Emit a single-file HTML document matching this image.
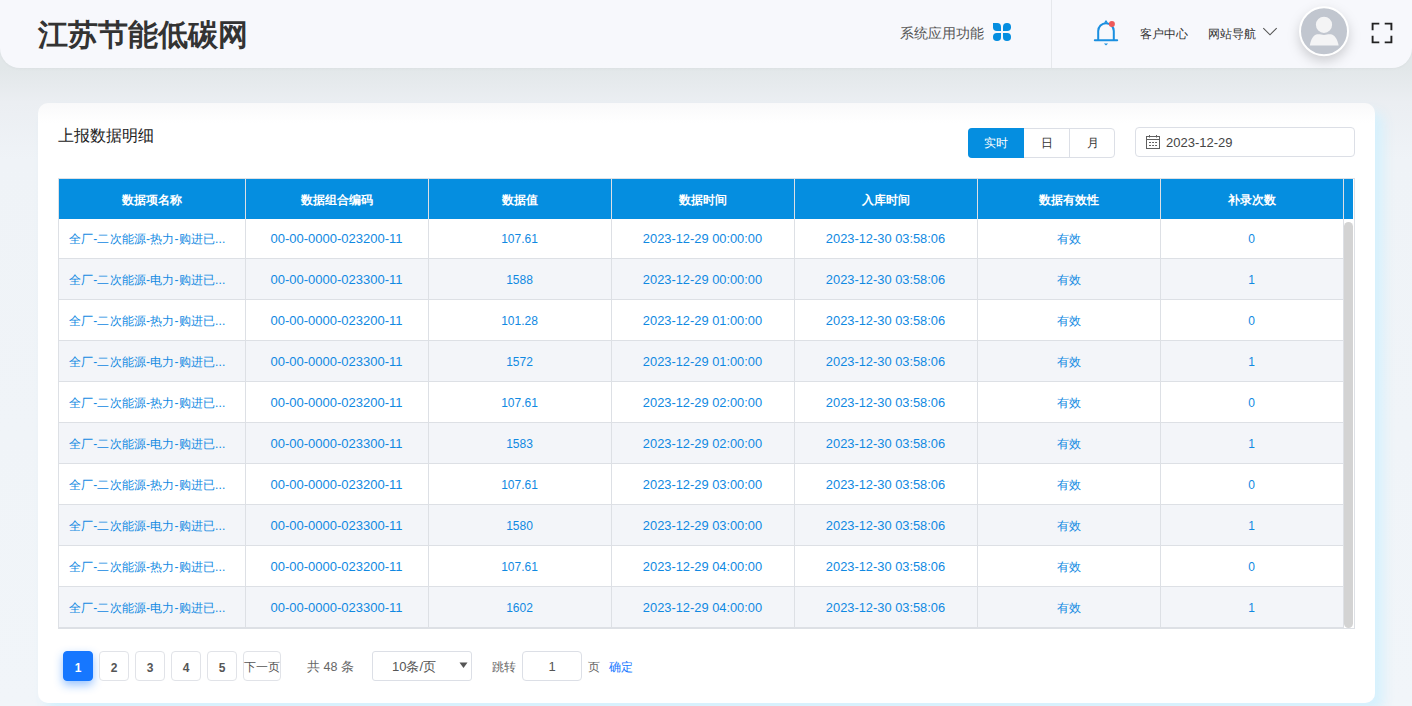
<!DOCTYPE html>
<html><head><meta charset="utf-8">
<style>
*{box-sizing:border-box;margin:0;padding:0}
html,body{width:1412px;height:706px;overflow:hidden}
body{font-family:"Liberation Sans",sans-serif;background:linear-gradient(180deg,#e2e7e9 68px,#ebeef2 102px,#eff3f7 160px,#f1f5f9 100%);position:relative;color:#333}
.a{position:absolute;white-space:nowrap}
.hdr{left:0;top:0;width:1412px;height:68px;background:#f7f8fc;border-radius:0 0 20px 20px;box-shadow:0 1px 3px rgba(0,0,0,0.03)}
.logo{left:38px;top:18px;font-size:30px;font-weight:900;color:#333;line-height:34px}
.card{left:38px;top:103px;width:1337px;height:600px;background:linear-gradient(180deg,#f9f9fa 0px,#ffffff 20px);border-radius:10px;box-shadow:8px 9px 12px rgba(212,240,253,0.95)}
.tht{color:#fff;font-size:12px;font-weight:bold;text-align:center}
.td{color:#1089e2}
.c0{font-size:12px;letter-spacing:0.15px}.c1{font-size:13px}.c2{font-size:12px}.c3{font-size:12.85px}.c5{font-size:12px}
.hl{height:1px;background:#dde0e5}
.vl{width:1px;background:#dde0e5}
.pb{width:30px;height:30px;border:1px solid #e1e3e8;border-radius:4px;background:#fff;font-size:12px;font-weight:bold;color:#555;text-align:center;line-height:32px}
</style></head><body>
<div class="a hdr"></div>
<div class="a logo">江苏节能低碳网</div>
<div class="a" style="left:900px;top:24px;font-size:14px;line-height:18px;color:#555">系统应用功能</div>
<svg class="a" style="left:993px;top:23px" width="18" height="18" viewBox="0 0 18 18"><g fill="#058ee0">
<path d="M0 0H4.2A3.8 3.8 0 0 1 8 3.8V8H3.8A3.8 3.8 0 0 1 0 4.2Z"/>
<path d="M10 8V3.8A3.8 3.8 0 0 1 13.8 0h0.4A3.8 3.8 0 0 1 18 3.8v0.4A3.8 3.8 0 0 1 14.2 8Z"/>
<path d="M8 10V14.2A3.8 3.8 0 0 1 4.2 18h-0.4A3.8 3.8 0 0 1 0 14.2v-0.4A3.8 3.8 0 0 1 3.8 10Z"/>
<path d="M10 10H14.2A3.8 3.8 0 0 1 18 13.8v0.4A3.8 3.8 0 0 1 14.2 18h-0.4A3.8 3.8 0 0 1 10 14.2Z"/>
</g></svg>
<div class="a" style="left:1051px;top:0;width:1px;height:68px;background:#e6e8ec"></div>
<svg class="a" style="left:1090px;top:16px" width="32" height="32" viewBox="0 0 32 32">
<path d="M4.8 24.3H27.2" stroke="#1a8fe0" stroke-width="2" stroke-linecap="round" fill="none"/>
<path d="M8.2 24V15A7.8 7.8 0 0 1 23.8 15V24" stroke="#1a8fe0" stroke-width="2" fill="none"/>
<path d="M14 6.8L16 3.9L18 6.8Z" fill="#1a8fe0"/>
<path d="M13.9 27.4H18.1L16 29.4Z" fill="#1a8fe0"/>
<circle cx="21.9" cy="7.9" r="3" fill="#ee5a5a"/>
</svg>
<div class="a" style="left:1140px;top:26px;font-size:12px;line-height:16px;color:#333">客户中心</div>
<div class="a" style="left:1208px;top:26px;font-size:12px;line-height:16px;color:#333">网站导航</div>
<svg class="a" style="left:1262px;top:27px" width="16" height="10" viewBox="0 0 16 10"><path d="M1.3 1.2L8 7.8L14.7 1.2" stroke="#555" stroke-width="1.1" fill="none"/></svg>
<svg class="a" style="left:1298px;top:5px;filter:drop-shadow(0 5px 6px rgba(0,0,0,0.17))" width="52" height="52" viewBox="0 0 52 52">
<circle cx="26" cy="26.2" r="24" fill="#c1c6cf" stroke="#fff" stroke-width="2"/>
<path d="M11.8 40.6C12.8 34.5 15.5 29.6 19.5 29.3H32.5C36.5 29.6 39.6 34.5 40.6 40.6Z" fill="#f4f4f5"/>
<circle cx="26" cy="19.8" r="9.1" fill="#f4f4f5" stroke="#c1c6cf" stroke-width="2"/>
</svg>
<svg class="a" style="left:1371px;top:22px" width="22" height="22" viewBox="0 0 22 22"><path d="M1.6 8.3V1.6H8.3M13.7 1.6H20.4V8.3M20.4 13.7V20.4H13.7M8.3 20.4H1.6V13.7" stroke="#222" stroke-width="1.9" fill="none"/></svg>
<div class="a card"></div>
<div class="a" style="left:58px;top:126px;font-size:16px;line-height:20px;font-weight:500;color:#222">上报数据明细</div>
<div class="a" style="left:968px;top:128px;width:147px;height:30px;border:1px solid #dcdfe6;border-radius:4px;background:#fff"></div>
<div class="a" style="left:968px;top:128px;width:56px;height:30px;background:#058ee0;border-radius:4px 0 0 4px;color:#fff;font-size:12px;text-align:center;line-height:30px">实时</div>
<div class="a" style="left:1024px;top:128px;width:46px;height:30px;border-right:1px solid #dcdfe6;font-size:12px;text-align:center;line-height:30px;color:#333">日</div>
<div class="a" style="left:1070px;top:128px;width:45px;height:30px;font-size:12px;text-align:center;line-height:30px;color:#333">月</div>
<div class="a" style="left:1135px;top:127px;width:220px;height:30px;border:1px solid #dcdfe6;border-radius:4px;background:#fff"></div>
<svg class="a" style="left:1145px;top:134px" width="16" height="16" viewBox="0 0 16 16"><g fill="none" stroke="#606060" stroke-width="1"><rect x="1.5" y="2.5" width="13" height="12"/><path d="M1.5 5.5H14.5M4.5 1V3.5M11.5 1V3.5"/></g><path d="M4 8.5H6M7.1 8.5H9M10.1 8.5H12M4 11.5H6M7.1 11.5H9M10.1 11.5H12" stroke="#606060" stroke-width="1"/></svg>
<div class="a" style="left:1166px;top:128px;line-height:30px;font-size:13px;color:#444">2023-12-29</div>
<div class="a" style="left:58px;top:179px;width:1295px;height:40px;background:#058ee0"></div>
<div class="a tht" style="left:58px;top:180px;width:187px;line-height:40px">数据项名称</div>
<div class="a tht" style="left:245px;top:180px;width:183px;line-height:40px">数据组合编码</div>
<div class="a tht" style="left:428px;top:180px;width:183px;line-height:40px">数据值</div>
<div class="a tht" style="left:611px;top:180px;width:183px;line-height:40px">数据时间</div>
<div class="a tht" style="left:794px;top:180px;width:183px;line-height:40px">入库时间</div>
<div class="a tht" style="left:977px;top:180px;width:183px;line-height:40px">数据有效性</div>
<div class="a tht" style="left:1160px;top:180px;width:183px;line-height:40px">补录次数</div>
<div class="a" style="left:58px;top:219px;width:1285px;height:40px;background:#ffffff"></div>
<div class="a td c0" style="left:69px;top:219px;line-height:41px">全厂-二次能源-热力-购进已...</div>
<div class="a td c1" style="left:245px;top:218.4px;width:183px;text-align:center;line-height:41px">00-00-0000-023200-11</div>
<div class="a td c2" style="left:428px;top:219px;width:183px;text-align:center;line-height:41px">107.61</div>
<div class="a td c3" style="left:611px;top:218.4px;width:183px;text-align:center;line-height:41px">2023-12-29 00:00:00</div>
<div class="a td c3" style="left:794px;top:218.4px;width:183px;text-align:center;line-height:41px">2023-12-30 03:58:06</div>
<div class="a td c5" style="left:977px;top:219px;width:183px;text-align:center;line-height:41px">有效</div>
<div class="a td c2" style="left:1160px;top:219px;width:183px;text-align:center;line-height:41px">0</div>
<div class="a hl" style="left:58px;top:258px;width:1285px"></div>
<div class="a" style="left:58px;top:259px;width:1285px;height:41px;background:#f3f5f9"></div>
<div class="a td c0" style="left:69px;top:260px;line-height:41px">全厂-二次能源-电力-购进已...</div>
<div class="a td c1" style="left:245px;top:259.4px;width:183px;text-align:center;line-height:41px">00-00-0000-023300-11</div>
<div class="a td c2" style="left:428px;top:260px;width:183px;text-align:center;line-height:41px">1588</div>
<div class="a td c3" style="left:611px;top:259.4px;width:183px;text-align:center;line-height:41px">2023-12-29 00:00:00</div>
<div class="a td c3" style="left:794px;top:259.4px;width:183px;text-align:center;line-height:41px">2023-12-30 03:58:06</div>
<div class="a td c5" style="left:977px;top:260px;width:183px;text-align:center;line-height:41px">有效</div>
<div class="a td c2" style="left:1160px;top:260px;width:183px;text-align:center;line-height:41px">1</div>
<div class="a hl" style="left:58px;top:299px;width:1285px"></div>
<div class="a" style="left:58px;top:300px;width:1285px;height:41px;background:#ffffff"></div>
<div class="a td c0" style="left:69px;top:301px;line-height:41px">全厂-二次能源-热力-购进已...</div>
<div class="a td c1" style="left:245px;top:300.4px;width:183px;text-align:center;line-height:41px">00-00-0000-023200-11</div>
<div class="a td c2" style="left:428px;top:301px;width:183px;text-align:center;line-height:41px">101.28</div>
<div class="a td c3" style="left:611px;top:300.4px;width:183px;text-align:center;line-height:41px">2023-12-29 01:00:00</div>
<div class="a td c3" style="left:794px;top:300.4px;width:183px;text-align:center;line-height:41px">2023-12-30 03:58:06</div>
<div class="a td c5" style="left:977px;top:301px;width:183px;text-align:center;line-height:41px">有效</div>
<div class="a td c2" style="left:1160px;top:301px;width:183px;text-align:center;line-height:41px">0</div>
<div class="a hl" style="left:58px;top:340px;width:1285px"></div>
<div class="a" style="left:58px;top:341px;width:1285px;height:41px;background:#f3f5f9"></div>
<div class="a td c0" style="left:69px;top:342px;line-height:41px">全厂-二次能源-电力-购进已...</div>
<div class="a td c1" style="left:245px;top:341.4px;width:183px;text-align:center;line-height:41px">00-00-0000-023300-11</div>
<div class="a td c2" style="left:428px;top:342px;width:183px;text-align:center;line-height:41px">1572</div>
<div class="a td c3" style="left:611px;top:341.4px;width:183px;text-align:center;line-height:41px">2023-12-29 01:00:00</div>
<div class="a td c3" style="left:794px;top:341.4px;width:183px;text-align:center;line-height:41px">2023-12-30 03:58:06</div>
<div class="a td c5" style="left:977px;top:342px;width:183px;text-align:center;line-height:41px">有效</div>
<div class="a td c2" style="left:1160px;top:342px;width:183px;text-align:center;line-height:41px">1</div>
<div class="a hl" style="left:58px;top:381px;width:1285px"></div>
<div class="a" style="left:58px;top:382px;width:1285px;height:41px;background:#ffffff"></div>
<div class="a td c0" style="left:69px;top:383px;line-height:41px">全厂-二次能源-热力-购进已...</div>
<div class="a td c1" style="left:245px;top:382.4px;width:183px;text-align:center;line-height:41px">00-00-0000-023200-11</div>
<div class="a td c2" style="left:428px;top:383px;width:183px;text-align:center;line-height:41px">107.61</div>
<div class="a td c3" style="left:611px;top:382.4px;width:183px;text-align:center;line-height:41px">2023-12-29 02:00:00</div>
<div class="a td c3" style="left:794px;top:382.4px;width:183px;text-align:center;line-height:41px">2023-12-30 03:58:06</div>
<div class="a td c5" style="left:977px;top:383px;width:183px;text-align:center;line-height:41px">有效</div>
<div class="a td c2" style="left:1160px;top:383px;width:183px;text-align:center;line-height:41px">0</div>
<div class="a hl" style="left:58px;top:422px;width:1285px"></div>
<div class="a" style="left:58px;top:423px;width:1285px;height:41px;background:#f3f5f9"></div>
<div class="a td c0" style="left:69px;top:424px;line-height:41px">全厂-二次能源-电力-购进已...</div>
<div class="a td c1" style="left:245px;top:423.4px;width:183px;text-align:center;line-height:41px">00-00-0000-023300-11</div>
<div class="a td c2" style="left:428px;top:424px;width:183px;text-align:center;line-height:41px">1583</div>
<div class="a td c3" style="left:611px;top:423.4px;width:183px;text-align:center;line-height:41px">2023-12-29 02:00:00</div>
<div class="a td c3" style="left:794px;top:423.4px;width:183px;text-align:center;line-height:41px">2023-12-30 03:58:06</div>
<div class="a td c5" style="left:977px;top:424px;width:183px;text-align:center;line-height:41px">有效</div>
<div class="a td c2" style="left:1160px;top:424px;width:183px;text-align:center;line-height:41px">1</div>
<div class="a hl" style="left:58px;top:463px;width:1285px"></div>
<div class="a" style="left:58px;top:464px;width:1285px;height:41px;background:#ffffff"></div>
<div class="a td c0" style="left:69px;top:465px;line-height:41px">全厂-二次能源-热力-购进已...</div>
<div class="a td c1" style="left:245px;top:464.4px;width:183px;text-align:center;line-height:41px">00-00-0000-023200-11</div>
<div class="a td c2" style="left:428px;top:465px;width:183px;text-align:center;line-height:41px">107.61</div>
<div class="a td c3" style="left:611px;top:464.4px;width:183px;text-align:center;line-height:41px">2023-12-29 03:00:00</div>
<div class="a td c3" style="left:794px;top:464.4px;width:183px;text-align:center;line-height:41px">2023-12-30 03:58:06</div>
<div class="a td c5" style="left:977px;top:465px;width:183px;text-align:center;line-height:41px">有效</div>
<div class="a td c2" style="left:1160px;top:465px;width:183px;text-align:center;line-height:41px">0</div>
<div class="a hl" style="left:58px;top:504px;width:1285px"></div>
<div class="a" style="left:58px;top:505px;width:1285px;height:41px;background:#f3f5f9"></div>
<div class="a td c0" style="left:69px;top:506px;line-height:41px">全厂-二次能源-电力-购进已...</div>
<div class="a td c1" style="left:245px;top:505.4px;width:183px;text-align:center;line-height:41px">00-00-0000-023300-11</div>
<div class="a td c2" style="left:428px;top:506px;width:183px;text-align:center;line-height:41px">1580</div>
<div class="a td c3" style="left:611px;top:505.4px;width:183px;text-align:center;line-height:41px">2023-12-29 03:00:00</div>
<div class="a td c3" style="left:794px;top:505.4px;width:183px;text-align:center;line-height:41px">2023-12-30 03:58:06</div>
<div class="a td c5" style="left:977px;top:506px;width:183px;text-align:center;line-height:41px">有效</div>
<div class="a td c2" style="left:1160px;top:506px;width:183px;text-align:center;line-height:41px">1</div>
<div class="a hl" style="left:58px;top:545px;width:1285px"></div>
<div class="a" style="left:58px;top:546px;width:1285px;height:41px;background:#ffffff"></div>
<div class="a td c0" style="left:69px;top:547px;line-height:41px">全厂-二次能源-热力-购进已...</div>
<div class="a td c1" style="left:245px;top:546.4px;width:183px;text-align:center;line-height:41px">00-00-0000-023200-11</div>
<div class="a td c2" style="left:428px;top:547px;width:183px;text-align:center;line-height:41px">107.61</div>
<div class="a td c3" style="left:611px;top:546.4px;width:183px;text-align:center;line-height:41px">2023-12-29 04:00:00</div>
<div class="a td c3" style="left:794px;top:546.4px;width:183px;text-align:center;line-height:41px">2023-12-30 03:58:06</div>
<div class="a td c5" style="left:977px;top:547px;width:183px;text-align:center;line-height:41px">有效</div>
<div class="a td c2" style="left:1160px;top:547px;width:183px;text-align:center;line-height:41px">0</div>
<div class="a hl" style="left:58px;top:586px;width:1285px"></div>
<div class="a" style="left:58px;top:587px;width:1285px;height:41px;background:#f3f5f9"></div>
<div class="a td c0" style="left:69px;top:588px;line-height:41px">全厂-二次能源-电力-购进已...</div>
<div class="a td c1" style="left:245px;top:587.4px;width:183px;text-align:center;line-height:41px">00-00-0000-023300-11</div>
<div class="a td c2" style="left:428px;top:588px;width:183px;text-align:center;line-height:41px">1602</div>
<div class="a td c3" style="left:611px;top:587.4px;width:183px;text-align:center;line-height:41px">2023-12-29 04:00:00</div>
<div class="a td c3" style="left:794px;top:587.4px;width:183px;text-align:center;line-height:41px">2023-12-30 03:58:06</div>
<div class="a td c5" style="left:977px;top:588px;width:183px;text-align:center;line-height:41px">有效</div>
<div class="a td c2" style="left:1160px;top:588px;width:183px;text-align:center;line-height:41px">1</div>
<div class="a hl" style="left:58px;top:627px;width:1285px"></div>
<div class="a vl" style="left:245px;top:179px;height:449px"></div>
<div class="a vl" style="left:428px;top:179px;height:449px"></div>
<div class="a vl" style="left:611px;top:179px;height:449px"></div>
<div class="a vl" style="left:794px;top:179px;height:449px"></div>
<div class="a vl" style="left:977px;top:179px;height:449px"></div>
<div class="a vl" style="left:1160px;top:179px;height:449px"></div>
<div class="a vl" style="left:1343px;top:179px;height:449px"></div>
<div class="a" style="left:58px;top:178px;width:1297px;height:451px;border:1px solid #dde0e5"></div>
<div class="a" style="left:1344px;top:222px;width:9px;height:406px;background:#d3d3d3;border-radius:5px"></div>
<div class="a pb" style="left:63px;top:651px;background:#1677ff;border-color:#1677ff;color:#fff;box-shadow:0 4px 10px rgba(22,119,255,0.45)">1</div>
<div class="a pb" style="left:99px;top:651px">2</div>
<div class="a pb" style="left:135px;top:651px">3</div>
<div class="a pb" style="left:171px;top:651px">4</div>
<div class="a pb" style="left:207px;top:651px">5</div>
<div class="a pb" style="left:243px;top:651px;width:38px;font-weight:normal;text-align:left;line-height:30px">下一页</div>
<div class="a" style="left:307px;top:658px;font-size:12.5px;line-height:18px;color:#666">共 48 条</div>
<div class="a" style="left:372px;top:651px;width:100px;height:30px;border:1px solid #dcdfe6;border-radius:3px;background:#fff"></div>
<div class="a" style="left:392px;top:652px;font-size:13px;line-height:30px;color:#555">10条/页</div>
<svg class="a" style="left:459px;top:662px" width="9" height="7" viewBox="0 0 9 7"><path d="M0.5 0.5H8.5L4.5 6Z" fill="#555"/></svg>
<div class="a" style="left:492px;top:652px;font-size:12px;line-height:30px;color:#666">跳转</div>
<div class="a" style="left:522px;top:651px;width:60px;height:30px;border:1px solid #dcdfe6;border-radius:4px;background:#fff;font-size:13px;text-align:center;line-height:30px;color:#555">1</div>
<div class="a" style="left:588px;top:652px;font-size:12px;line-height:30px;color:#666">页</div>
<div class="a" style="left:609px;top:652px;font-size:12px;line-height:30px;color:#1677ff;font-weight:500">确定</div>
</body></html>
